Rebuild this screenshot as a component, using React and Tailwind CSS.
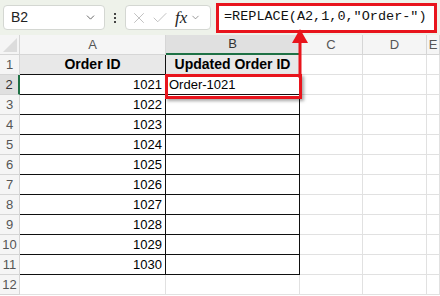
import { ChevronDown, X, Check } from 'lucide-react';

const cols = ['A', 'B', 'C', 'D', 'E'];
const ids = [1021, 1022, 1023, 1024, 1025, 1026, 1027, 1028, 1029, 1030];

const FormulaBar = () => (
  <div className="h-[35px] bg-[#eef2ea] flex items-center pl-[3px] gap-[5px] relative">
    <div className="shrink-0 w-[102px] h-[25px] bg-white border border-[#d4d7d2] rounded-[4px] flex items-center justify-between px-[7px]">
      <span className="text-[14px] text-[#222]">B2</span>
      <ChevronDown className="w-[13px] h-[13px] text-[#555]" strokeWidth={1.6} />
    </div>
    <div className="shrink-0 w-[10px] flex flex-col items-center gap-[2px]">
      <span className="w-[2px] h-[2px] bg-[#444]" />
      <span className="w-[2px] h-[2px] bg-[#444]" />
      <span className="w-[2px] h-[2px] bg-[#444]" />
    </div>
    <div className="shrink-0 w-[86px] h-[25px] bg-white border border-[#d4d7d2] rounded-[4px] flex items-center px-[4px] gap-[3px]">
      <X className="w-[18px] h-[18px] text-[#bbb]" strokeWidth={1.2} />
      <Check className="w-[18px] h-[18px] text-[#bbb]" strokeWidth={1.2} />
      <span className="ml-[3px] text-[17px] italic text-[#222] font-['Liberation_Serif',serif] leading-none">fx</span>
      <ChevronDown className="w-[11px] h-[11px] text-[#777]" strokeWidth={1.6} />
    </div>
    <div className="shrink-0 w-[221px] h-[30px] border-[3px] border-[#e8141c] bg-white flex items-center pl-[5px]">
      <span className="text-[13.5px] text-[#111] font-['Liberation_Mono',monospace] whitespace-nowrap">=REPLACE(A2,1,0,"Order-")</span>
    </div>
  </div>
);

const Grid = () => {
  const cell = 'border-r border-b border-[#e1e1e1] h-[20px]';
  return (
    <div className="grid grid-cols-[20px_146px_134px_63px_64px_1fr] font-['Liberation_Sans',Arial,sans-serif] text-[13px]">
      {/* column headers */}
      <div className="h-[20px] bg-[#f5f5f5] border-r border-b border-[#d6d6d6] relative overflow-hidden">
        <div className="absolute right-[2px] bottom-[2px] w-0 h-0 border-l-[14px] border-l-transparent border-b-[14px] border-b-[#dcdcdc]" />
      </div>
      {cols.map((c) => (
        <div
          key={c}
          className={
            c === 'B'
              ? 'h-[20px] bg-[#e0e0e0] border-r border-[#d6d6d6] border-b-2 border-b-[#1e7145] flex items-center justify-center text-[#333]'
              : 'h-[20px] bg-[#f5f5f5] border-r border-b border-[#d6d6d6] flex items-center justify-center text-[#555]'
          }
        >
          {c}
        </div>
      ))}

      {/* row 1 */}
      <div className="h-[20px] bg-[#f5f5f5] border-r border-b border-[#d6d6d6] flex items-center justify-center text-[#555]">1</div>
      <div className="h-[20px] bg-[#e8e8e8] border-r border-b border-[#111] flex items-center justify-center font-bold text-[14px] text-black">Order ID</div>
      <div className="h-[20px] bg-[#e8e8e8] border-r border-b border-[#111] flex items-center justify-center font-bold text-[14px] text-black">Updated Order ID</div>
      <div className={cell} />
      <div className={cell} />
      <div className={cell} />

      {ids.map((id, i) => (
        <div key={id} className="contents">
          <div
            className={
              i === 0
                ? 'h-[20px] bg-[#e0e0e0] border-r-2 border-r-[#1e7145] border-b border-b-[#d6d6d6] flex items-center justify-center text-[#333]'
                : 'h-[20px] bg-[#f5f5f5] border-r border-b border-[#d6d6d6] flex items-center justify-center text-[#555]'
            }
          >
            {i + 2}
          </div>
          <div className="h-[20px] bg-white border-r border-b border-[#111] flex items-center justify-end pr-[3px] text-black">{id}</div>
          <div className="h-[20px] bg-white border-r border-b border-[#111] flex items-center pl-[3px] text-black">
            {i === 0 ? 'Order-1021' : ''}
          </div>
          <div className={cell} />
          <div className={cell} />
          <div className={cell} />
        </div>
      ))}

      <div className="h-[20px] bg-[#f5f5f5] border-r border-b border-[#d6d6d6] flex items-center justify-center text-[#555]">12</div>
      <div className={cell} />
      <div className={cell} />
      <div className={cell} />
      <div className={cell} />
      <div className={cell} />
    </div>
  );
};

export default function App() {
  return (
    <div className="w-[440px] h-[296px] bg-white overflow-hidden relative font-['Liberation_Sans',Arial,sans-serif]">
      <FormulaBar />
      <Grid />
      {/* highlight box around B2 */}
      <div className="absolute left-[165px] top-[74px] w-[137px] h-[25px] border-[3px] border-[#e8141c] shadow-[2px_2px_3px_rgba(0,0,0,0.35)]" />
      {/* arrow */}
      <svg className="absolute left-[290px] top-[28px]" width="20" height="50" viewBox="0 0 20 50">
        <polygon points="10,1 2,15 18,15" fill="#e8141c" />
        <rect x="8.5" y="14" width="3" height="36" fill="#e8141c" />
      </svg>
    </div>
  );
}
